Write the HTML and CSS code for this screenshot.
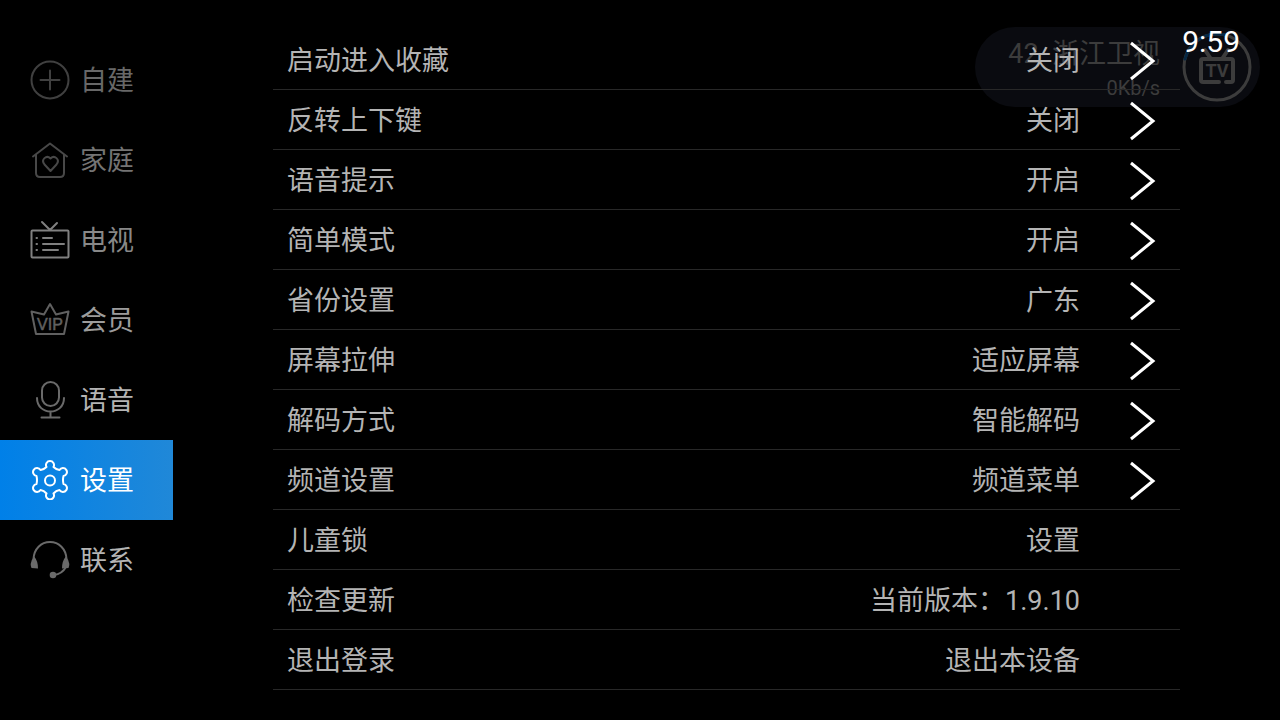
FILE: index.html
```html
<!DOCTYPE html>
<html lang="zh-CN">
<head>
    <meta charset="UTF-8">
    <meta name="viewport" content="width=device-width, initial-scale=1.0">
    <title>设置</title>
    <link rel="stylesheet" href="styles.css">
</head>
<body>
    <div class="channel-info">
        <div class="channel-text">
            <div class="channel-name">42 &nbsp;浙江卫视</div>
            <div class="channel-speed">0Kb/s</div>
        </div>
        <svg class="channel-logo" viewBox="0 0 70 70">
            <circle cx="35" cy="35" r="33"/>
            <path class="progress" d="M3 27A33 33 0 0 1 43 3"/>
            <path class="set" d="M23 18l6 9M46 18l-6 9M37 50H21q-2 0-2-2V29q0-2 2-2h28q2 0 2 2v19q0 2-2 2h-5"/>
            <text x="35" y="45" text-anchor="middle">TV</text>
        </svg>
    </div>

    <div class="screen">
        <nav class="menu">
            <button class="menu-item fade-4">
                <svg viewBox="0 0 40 40"><circle cx="20" cy="20" r="18.5"/><path d="M20 10.500v19M10.500 20h19"/></svg>
                <span>自建</span>
            </button>
            <button class="menu-item fade-3">
                <svg viewBox="0 0 40 40"><path d="M3 16.500L20 3.500l17 13M6 15v18q0 4 4 4h20q4 0 4-4V15"/><path d="M20.500 31l-6-6.500c-4-5 2-10 6-6 4-4 10 1 6 6z"/></svg>
                <span>家庭</span>
            </button>
            <button class="menu-item fade-2">
                <svg viewBox="0 0 40 40"><rect x="1.500" y="10.500" width="37" height="27" rx="1"/><path d="M12 2l8 8 7-7M13 18h9M13 24h21M13 30h15M6.500 18h.5M6.500 24h.5M6.500 30h.5"/></svg>
                <span>电视</span>
            </button>
            <button class="menu-item fade-1">
                <svg viewBox="0 0 40 40"><path d="M1.500 11.500l12.500 3 6-10.500 6 10.500 12.500-3L34 34H6z"/><text x="20" y="30" text-anchor="middle">VIP</text></svg>
                <span>会员</span>
            </button>
            <button class="menu-item">
                <svg viewBox="0 0 40 40"><rect x="12" y="2" width="17" height="24" rx="8.500"/><path d="M7 18c0 18 27 18 27 0M20.500 31.500v6M11.500 37.500h18"/></svg>
                <span>语音</span>
            </button>
            <button class="menu-item active">
                <svg viewBox="0 0 40 40"><path d="M16.500 7A4 4 0 1 1 23.500 7Q26 9.500 29.500 10A4 4 0 1 1 33.500 16Q32.500 20 33.500 24A4 4 0 1 1 29.500 30Q26 30.500 23.500 33.500A4 4 0 1 1 16.500 33.500Q14 30.500 10.500 30A4 4 0 1 1 6.500 24Q7.500 20 6.500 16A4 4 0 1 1 10.500 10Q14 9.500 16.500 7Z"/><circle cx="20" cy="20.500" r="5"/></svg>
                <span>设置</span>
            </button>
            <button class="menu-item">
                <svg viewBox="0 0 40 40"><path d="M3.500 19C4 9 11 2 20 2s16 7 16.500 17M36 27q-4 7-12 8"/><path class="solid" d="M4 17Q-1 22 1.500 28l6.500.5Q8 21 4.500 17zM36 17q5 5 2.500 11l-6.500.5q0-7.500 3.500-11.500z"/><circle class="solid" cx="23" cy="35" r="3.300"/></svg>
                <span>联系</span>
            </button>
        </nav>

        <main class="settings">
            <button class="row"><span>启动进入收藏</span><span class="value">关闭</span><svg class="arrow" viewBox="0 0 28 40"><path d="M3 2l22 18L3 38"/></svg></button>
            <button class="row"><span>反转上下键</span><span class="value">关闭</span><svg class="arrow" viewBox="0 0 28 40"><path d="M3 2l22 18L3 38"/></svg></button>
            <button class="row"><span>语音提示</span><span class="value">开启</span><svg class="arrow" viewBox="0 0 28 40"><path d="M3 2l22 18L3 38"/></svg></button>
            <button class="row"><span>简单模式</span><span class="value">开启</span><svg class="arrow" viewBox="0 0 28 40"><path d="M3 2l22 18L3 38"/></svg></button>
            <button class="row"><span>省份设置</span><span class="value">广东</span><svg class="arrow" viewBox="0 0 28 40"><path d="M3 2l22 18L3 38"/></svg></button>
            <button class="row"><span>屏幕拉伸</span><span class="value">适应屏幕</span><svg class="arrow" viewBox="0 0 28 40"><path d="M3 2l22 18L3 38"/></svg></button>
            <button class="row"><span>解码方式</span><span class="value">智能解码</span><svg class="arrow" viewBox="0 0 28 40"><path d="M3 2l22 18L3 38"/></svg></button>
            <button class="row"><span>频道设置</span><span class="value">频道菜单</span><svg class="arrow" viewBox="0 0 28 40"><path d="M3 2l22 18L3 38"/></svg></button>
            <button class="row"><span>儿童锁</span><span class="value">设置</span></button>
            <button class="row"><span>检查更新</span><span class="value">当前版本：1.9.10</span></button>
            <button class="row"><span>退出登录</span><span class="value">退出本设备</span></button>
        </main>
    </div>

    <time class="clock">9:59</time>
</body>
</html>
```
FILE: styles.css
```css
body {
    margin: 0;
    background: #000;
    color: #b4b4b4;
    font-family: Roboto, "Noto Sans CJK SC", sans-serif;
    font-size: 27px;
    line-height: 40px;
}
button {
    margin: 0;
    padding: 0;
    border: 0;
    background: none;
    color: inherit;
    font: inherit;
    text-align: left;
}
svg {
    fill: none;
    stroke: currentColor;
    stroke-width: 2;
    stroke-linecap: round;
    stroke-linejoin: round;
    flex: none;
}
.screen {
    position: relative;
    display: flex;
    gap: 100px;
    padding: 30px 100px 30px 0;
}
.menu {
    width: 173px;
    padding-top: 10px;
    flex: none;
}
.menu-item {
    display: flex;
    align-items: center;
    gap: 10px;
    width: 100%;
    height: 80px;
    padding-left: 30px;
}
.menu-item span {
    padding-top: 2px;
}
.menu-item svg {
    width: 40px;
    height: 40px;
    color: #6a6a6a;
}
.menu-item text {
    font-family: "Liberation Sans", sans-serif;
    font-size: 16px;
    fill: currentColor;
    stroke: currentColor;
    stroke-width: 0.5;
}
.menu-item .solid {
    fill: currentColor;
    stroke: none;
}
.fade-4 { color: #686868; }
.fade-4 svg { color: #404040; }
.fade-3 { color: #747474; }
.fade-3 svg { color: #484848; }
.fade-2 { color: #888; }
.fade-2 svg { color: #808080; }
.fade-1 { color: #9c9c9c; }
.fade-1 svg { color: #606060; }
.menu-item.active {
    background: linear-gradient(to right, #0080e8, #2088d8);
    color: #fff;
}
.menu-item.active svg {
    color: #fff;
}
.settings {
    flex: 1;
}
.row {
    display: flex;
    align-items: center;
    width: 100%;
    height: 60px;
    padding: 2px 100px 0 14px;
    border-bottom: 1px solid #282828;
}
.value {
    margin-left: auto;
}
.arrow {
    width: 28px;
    height: 40px;
    margin: 0 -76px 0 48px;
    color: #fff;
    stroke-width: 3;
    stroke-linecap: butt;
    stroke-linejoin: miter;
}

/* channel banner sits behind the settings list */
.channel-info {
    position: absolute;
    top: 27px;
    right: 20px;
    display: flex;
    align-items: center;
    justify-content: flex-end;
    gap: 22px;
    box-sizing: border-box;
    width: 285px;
    height: 80px;
    padding-right: 8px;
    border-radius: 40px;
    background: #0a0b10;
    color: #3c3c3c;
    text-align: right;
}
.channel-name {
    padding-top: 2px;
    line-height: 40px;
}
.channel-speed {
    font-size: 20px;
    line-height: 28px;
}
.channel-logo {
    width: 70px;
    height: 70px;
    stroke-width: 3;
}
.channel-logo .progress {
    stroke: #062844;
}
.channel-logo .set {
    stroke-width: 4;
}
.channel-logo text {
    font-size: 18px;
    font-weight: bold;
    fill: currentColor;
    stroke: none;
}
.clock {
    position: absolute;
    top: 22px;
    right: 40px;
    color: #fff;
    font-size: 30px;
}
```
